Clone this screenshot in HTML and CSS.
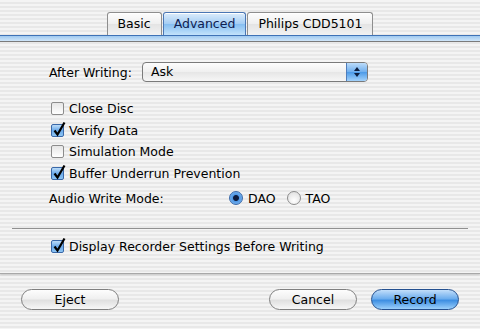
FILE: index.html
```html
<!DOCTYPE html>
<html lang="en">

<head>
    <meta charset="UTF-8">
    <title>Burn Settings</title>
    <link rel="stylesheet" href="styles.css">
</head>

<body>
    <div class="window">
        <div class="tabs">
            <div class="tab">Basic</div>
            <div class="tab selected">Advanced</div>
            <div class="tab">Philips CDD5101</div>
        </div>
        <div class="band"></div>

        <div class="panel">
            <div class="row popupRow">
                <span class="label">After Writing:</span>
                <div class="popup">
                    <span class="popupText">Ask</span>
                    <span class="popupArrows">
                        <svg width="8" height="12" viewBox="0 0 8 12">
                            <path d="M4 1 L7 5 L1 5 Z" fill="#0e1f3f" />
                            <path d="M4 11 L7 7 L1 7 Z" fill="#0e1f3f" />
                        </svg>
                    </span>
                </div>
            </div>

            <div class="checks">
                <div class="check"><span class="box"></span>Close Disc</div>
                <div class="check"><span class="box on"><svg class="tick" width="14" height="16" viewBox="0 0 14 16"><path d="M2.5 9.5 L5.5 13.5 L12.5 1.5" fill="none" stroke="#000" stroke-width="2.2" /></svg></span>Verify Data</div>
                <div class="check"><span class="box"></span>Simulation Mode</div>
                <div class="check"><span class="box on"><svg class="tick" width="14" height="16" viewBox="0 0 14 16"><path d="M2.5 9.5 L5.5 13.5 L12.5 1.5" fill="none" stroke="#000" stroke-width="2.2" /></svg></span>Buffer Underrun Prevention</div>
            </div>

            <div class="row audioRow">
                <span class="label wide">Audio Write Mode:</span>
                <span class="radio on"></span><span class="radioText">DAO</span>
                <span class="radio"></span><span class="radioText">TAO</span>
            </div>

            <div class="sep"></div>

            <div class="check display"><span class="box on"><svg class="tick" width="14" height="16" viewBox="0 0 14 16"><path d="M2.5 9.5 L5.5 13.5 L12.5 1.5" fill="none" stroke="#000" stroke-width="2.2" /></svg></span>Display Recorder Settings Before Writing</div>
        </div>

        <div class="buttons">
            <button class="btn eject">Eject</button>
            <span class="spacer"></span>
            <button class="btn">Cancel</button>
            <button class="btn default">Record</button>
        </div>
    </div>
</body>

</html>
```

FILE: styles.css
```css
body {
    margin: 0;
    font-family: "DejaVu Sans", "Liberation Sans", sans-serif;
    font-size: 12.5px;
    color: #000;
    background: repeating-linear-gradient(to bottom, #f4f4f4 0px, #f4f4f4 2px, #e8e8e8 2px, #e8e8e8 4px);
}

.window {
    width: 480px;
    height: 329px;
    overflow: hidden;
}

/* tabs */
.tabs {
    display: flex;
    justify-content: center;
    gap: 1px;
    padding-top: 12px;
}

.tab {
    height: 22px;
    line-height: 22px;
    padding: 0 10px;
    border: 1px solid #8e8e8e;
    border-bottom: none;
    border-radius: 3px 3px 0 0;
    background: linear-gradient(to bottom, #fdfdfd 0%, #efefef 50%, #e4e4e4 52%, #f2f2f2 100%);
    box-shadow: inset 0 1px 0 #fff;
}

.tab.selected {
    border-color: #4a76b4;
    color: #0f2050;
    background: linear-gradient(to bottom, #dcecfb 0%, #a6cef4 48%, #87bff1 52%, #c3e2fb 100%);
}

.band {
    height: 5px;
    border-top: 1px solid #3f72b6;
    border-bottom: 1px solid #7c7c7c;
    background: linear-gradient(to bottom, #9fc9f0, #d0e6f9);
}

/* panel */
.panel {
    padding: 20px 0 16px 49px;
    border-bottom: 1px solid #a8a8a8;
    box-shadow: 0 1px 2px rgba(0, 0, 0, 0.15);
}

.row {
    display: flex;
    align-items: center;
}

.label {
    width: 93px;
}

.label.wide {
    width: 180px;
}

.popupRow {
    height: 20px;
}

.popup {
    display: flex;
    width: 226px;
    height: 20px;
    box-sizing: border-box;
    border: 1px solid #7a7a7a;
    border-radius: 4px;
    background: linear-gradient(to bottom, #fdfdfd 0%, #efefef 50%, #e6e6e6 52%, #f6f6f6 100%);
    overflow: hidden;
}

.popupText {
    flex: 1;
    padding-left: 8px;
    line-height: 18px;
}

.popupArrows {
    display: flex;
    align-items: center;
    justify-content: center;
    width: 20px;
    background: linear-gradient(to bottom, #bcdcfa 0%, #72b0ee 48%, #4d9be8 52%, #a3d2fb 100%);
    border-left: 1px solid #4f7dbb;
}

.checks {
    margin-top: 16px;
}

.check {
    display: flex;
    align-items: center;
    height: 21.5px;
}

.box {
    position: relative;
    width: 13px;
    height: 13px;
    box-sizing: border-box;
    margin: 0 5px 0 2px;
    border: 1px solid #8c8c8c;
    border-radius: 2px;
    background: linear-gradient(to bottom, #e6e6e6, #ffffff);
}

.box.on {
    border-color: #3a68a8;
    background: linear-gradient(to bottom, #bcdcf8 0%, #6aa9ea 50%, #8dc5f4 100%);
}

.tick {
    position: absolute;
    left: 0;
    top: -4px;
}

.audioRow {
    height: 22px;
    margin-top: 3px;
}

.radio {
    width: 14px;
    height: 14px;
    box-sizing: border-box;
    border: 1px solid #8c8c8c;
    border-radius: 50%;
    background: radial-gradient(circle at 50% 70%, #ffffff 0%, #e2e2e2 80%);
    margin-right: 5px;
}

.radio.on {
    border-color: #3a68a8;
    background: radial-gradient(circle, #0d1b3c 0px, #0d1b3c 2.5px, #4f97e4 3.5px, #8fc3f4 100%);
}

.radioText {
    margin-right: 11px;
}

.sep {
    height: 1px;
    margin: 19px 12px 0 -37px;
    background: #909090;
}

.display {
    height: 22px;
    margin-top: 6px;
}

/* buttons */
.buttons {
    display: flex;
    gap: 14px;
    padding: 15px 21px 0 21px;
}

.spacer {
    flex: 1;
}

.btn {
    width: 88px;
    height: 21px;
    padding: 0;
    border: 1px solid #7f7f7f;
    border-radius: 11px;
    font-family: inherit;
    font-size: 12.5px;
    color: #000;
    background: linear-gradient(to bottom, #fdfdfd 0%, #f0f0f0 45%, #e0e0e0 55%, #f7f7f7 100%);
}

.btn.eject {
    width: 98px;
}

.btn.default {
    border-color: #24508f;
    background: linear-gradient(to bottom, #c2defa 0%, #6eaeee 45%, #3f8fe2 55%, #9bcffb 100%);
}
```
